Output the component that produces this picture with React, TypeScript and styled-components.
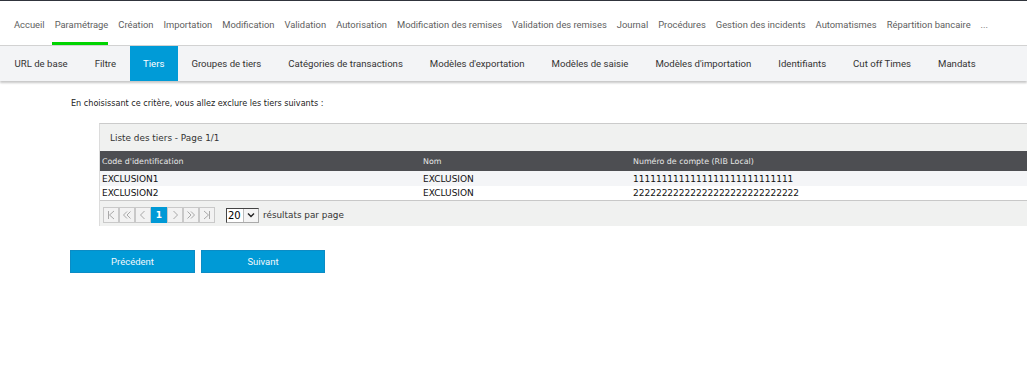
import React from 'react';
import styled, { createGlobalStyle } from 'styled-components';

const GlobalStyle = createGlobalStyle`
  html, body {
    margin: 0;
    padding: 0;
    background: #fff;
  }
  * { box-sizing: border-box; }
`;

const navFont = `Roboto, 'Noto Sans', sans-serif`;
const tableFont = `'DejaVu Sans', Verdana, sans-serif`;

const mainItems = [
  'Accueil', 'Paramétrage', 'Création', 'Importation', 'Modification', 'Validation',
  'Autorisation', 'Modification des remises', 'Validation des remises', 'Journal',
  'Procédures', 'Gestion des incidents', 'Automatismes', 'Répartition bancaire', '...',
];

const subItems = [
  'URL de base', 'Filtre', 'Tiers', 'Groupes de tiers', 'Catégories de transactions',
  "Modèles d'exportation", 'Modèles de saisie', "Modèles d'importation", 'Identifiants',
  'Cut off Times', 'Mandats',
];

const rows = [
  { code: 'EXCLUSION1', nom: 'EXCLUSION', compte: '1111111111111111111111111111' },
  { code: 'EXCLUSION2', nom: 'EXCLUSION', compte: '22222222222222222222222222222' },
];

const TopBar = styled.nav`
  display: flex;
  align-items: stretch;
  height: 46px;
  padding-left: 11px;
  gap: 7px;
  border-top: 1px solid #30343c;
  border-bottom: 1px solid #d2d2d2;
  font-family: ${navFont};
  font-size: 9.4px;
  color: #5e5e5e;
`;

const TopItem = styled.div<{ $active?: boolean }>`
  display: flex;
  align-items: center;
  padding: 6px 0 0 3px;
  border-bottom: 3px solid ${(p) => (p.$active ? '#00d400' : 'transparent')};
  white-space: nowrap;
`;

const SubBar = styled.div`
  display: flex;
  height: 35px;
  padding-left: 1px;
  background: #f3f4f6;
  box-shadow: 0 2px 2px rgba(0, 0, 0, 0.22);
  font-family: ${navFont};
  font-size: 9.6px;
  color: #333;
`;

const SubTab = styled.div<{ $active?: boolean }>`
  display: flex;
  align-items: center;
  padding: 0 13.5px;
  white-space: nowrap;
  background: ${(p) => (p.$active ? '#009bd7' : 'transparent')};
  color: ${(p) => (p.$active ? '#fff' : '#333')};
`;

const Content = styled.main`
  padding: 16px 0 0 0;
  font-family: ${tableFont};
  font-size: 9px;
  color: #222;
`;

const Intro = styled.p`
  margin: 0 0 14px 71px;
  line-height: 12px;
  font-size: 8.1px;
`;

const Panel = styled.section`
  margin-left: 99px;
  background: #f0f1f0;
  border-top: 1px solid #cbcbcb;
  border-left: 1px solid #dcdcdc;
`;

const PanelTitle = styled.div`
  height: 27px;
  display: flex;
  align-items: center;
  padding-left: 10px;
  font-size: 8.9px;
  color: #333;
`;

const Row = styled.div<{ $kind: 'head' | 'odd' | 'even' }>`
  display: grid;
  grid-template-columns: 321px 210px 1fr;
  height: ${(p) => (p.$kind === 'head' ? '20px' : '15px')};
  align-items: center;
  background: ${(p) => (p.$kind === 'head' ? '#4d4e52' : p.$kind === 'odd' ? '#f4f5f7' : '#fff')};
  color: ${(p) => (p.$kind === 'head' ? '#e6e6e6' : '#111')};
  font-size: ${(p) => (p.$kind === 'head' ? '7.9px' : '9px')};
  border-bottom: ${(p) => (p.$kind === 'even' ? '1px solid #c8c8c8' : 'none')};
`;

const Cell = styled.div`
  padding-left: 2px;
  white-space: nowrap;
`;

const Pager = styled.div`
  display: flex;
  align-items: center;
  height: 25px;
  padding: 3px 0 0 3px;
`;

const PageButtons = styled.div`
  display: flex;
`;

const PageBtn = styled.div<{ $active?: boolean }>`
  width: 16px;
  height: 16px;
  display: flex;
  align-items: center;
  justify-content: center;
  border: 1px solid ${(p) => (p.$active ? '#0099d6' : '#c9c9c9')};
  background: ${(p) => (p.$active ? '#0099d6' : '#f2f2f2')};
  color: #fff;
  font-weight: bold;
  font-size: 9px;
`;

const PageSize = styled.div`
  display: flex;
  align-items: center;
  margin-left: 11px;
  height: 15px;
  border: 1px solid #aaa;
  border-top-color: #444;
  border-left-color: #444;
  background: #fff;
`;

const SizeValue = styled.span`
  width: 16px;
  padding-left: 1px;
  font-size: 10px;
  color: #000;
`;

const SizeArrow = styled.div`
  width: 15px;
  height: 13px;
  display: flex;
  align-items: center;
  justify-content: center;
  border-left: 1px solid #bbb;
  background: #f4f4f4;
`;

const PagerLabel = styled.span`
  margin-left: 4px;
  font-size: 8.85px;
  color: #333;
`;

const Actions = styled.div`
  display: flex;
  gap: 6px;
  margin: 24px 0 0 70px;
`;

const Button = styled.button<{ $width: number }>`
  width: ${(p) => p.$width}px;
  height: 23px;
  background: #009ad6;
  border: 1px solid #0b8cc5;
  color: #f2f8fc;
  font-family: ${navFont};
  font-size: 9.5px;
  padding: 0;
`;

const Glyph: React.FC<{ d: string }> = ({ d }) => (
  <svg width="10" height="10" viewBox="0 0 10 10">
    <path d={d} fill="none" stroke="#a8a8a8" strokeWidth="1" />
  </svg>
);

const glyphs = {
  first: 'M2.5 1v8M8 1L3.5 5 8 9',
  prev2: 'M5 1.5L1.5 5 5 8.5M8.5 1.5L5 5 8.5 8.5',
  prev: 'M6.5 1L2.5 5 6.5 9',
  next: 'M3.5 1L7.5 5 3.5 9',
  next2: 'M1.5 1.5L5 5 1.5 8.5M5 1.5L8.5 5 5 8.5',
  last: 'M7.5 1v8M2 1L6.5 5 2 9',
};

const App: React.FC = () => (
  <>
    <GlobalStyle />
    <TopBar>
      {mainItems.map((item) => (
        <TopItem key={item} $active={item === 'Paramétrage'}>{item}</TopItem>
      ))}
    </TopBar>
    <SubBar>
      {subItems.map((item) => (
        <SubTab key={item} $active={item === 'Tiers'}>{item}</SubTab>
      ))}
    </SubBar>
    <Content>
      <Intro>En choisissant ce critère, vous allez exclure les tiers suivants :</Intro>
      <Panel>
        <PanelTitle>Liste des tiers - Page 1/1</PanelTitle>
        <Row $kind="head">
          <Cell>Code d'identification</Cell>
          <Cell>Nom</Cell>
          <Cell>Numéro de compte (RIB Local)</Cell>
        </Row>
        {rows.map((r, i) => (
          <Row key={r.code} $kind={i % 2 === 0 ? 'odd' : 'even'}>
            <Cell>{r.code}</Cell>
            <Cell>{r.nom}</Cell>
            <Cell>{r.compte}</Cell>
          </Row>
        ))}
        <Pager>
          <PageButtons>
            <PageBtn><Glyph d={glyphs.first} /></PageBtn>
            <PageBtn><Glyph d={glyphs.prev2} /></PageBtn>
            <PageBtn><Glyph d={glyphs.prev} /></PageBtn>
            <PageBtn $active>1</PageBtn>
            <PageBtn><Glyph d={glyphs.next} /></PageBtn>
            <PageBtn><Glyph d={glyphs.next2} /></PageBtn>
            <PageBtn><Glyph d={glyphs.last} /></PageBtn>
          </PageButtons>
          <PageSize>
            <SizeValue>20</SizeValue>
            <SizeArrow>
              <svg width="8" height="6" viewBox="0 0 8 6">
                <path d="M1 1.5L4 4.5 7 1.5" fill="none" stroke="#222" strokeWidth="1.4" />
              </svg>
            </SizeArrow>
          </PageSize>
          <PagerLabel>résultats par page</PagerLabel>
        </Pager>
      </Panel>
      <Actions>
        <Button $width={125}>Précédent</Button>
        <Button $width={124}>Suivant</Button>
      </Actions>
    </Content>
  </>
);

export default App;
